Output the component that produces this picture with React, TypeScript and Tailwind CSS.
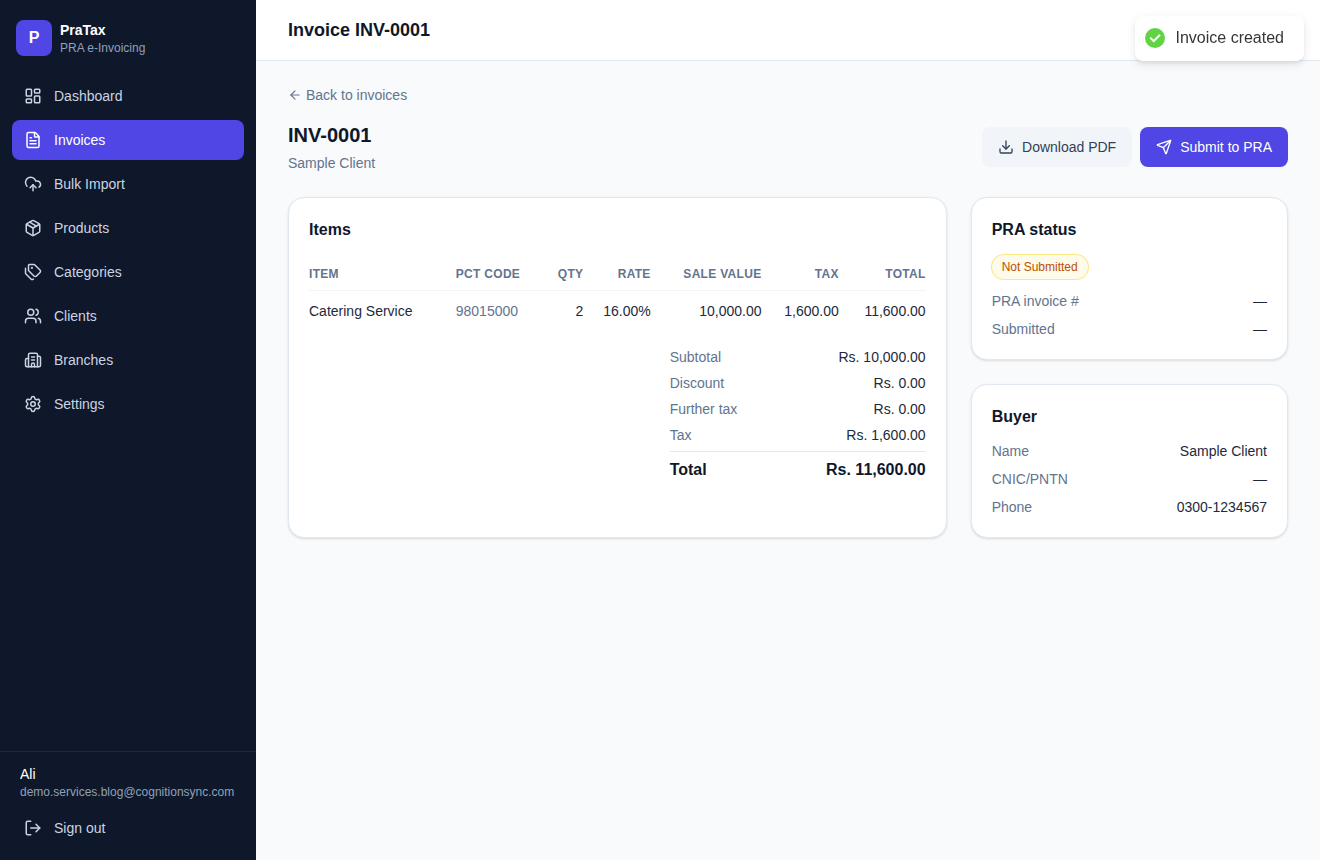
import type { ReactNode } from "react";
import {
  ArrowLeft,
  Building2,
  CloudUpload,
  Download,
  FileText,
  LayoutDashboard,
  LogOut,
  Package,
  Send,
  Settings,
  Tags,
  Users,
  type LucideIcon,
} from "lucide-react";

const navItems: { label: string; icon: LucideIcon; active?: boolean }[] = [
  { label: "Dashboard", icon: LayoutDashboard },
  { label: "Invoices", icon: FileText, active: true },
  { label: "Bulk Import", icon: CloudUpload },
  { label: "Products", icon: Package },
  { label: "Categories", icon: Tags },
  { label: "Clients", icon: Users },
  { label: "Branches", icon: Building2 },
  { label: "Settings", icon: Settings },
];

const lines = [
  {
    item: "Catering Service",
    code: "98015000",
    qty: "2",
    rate: "16.00%",
    value: "10,000.00",
    tax: "1,600.00",
    total: "11,600.00",
  },
];

const totals = [
  ["Subtotal", "Rs. 10,000.00"],
  ["Discount", "Rs. 0.00"],
  ["Further tax", "Rs. 0.00"],
  ["Tax", "Rs. 1,600.00"],
];

function Sidebar() {
  return (
    <aside className="flex w-64 shrink-0 flex-col bg-slate-900">
      <div className="flex items-center gap-2 px-4 py-5">
        <div className="flex size-9 items-center justify-center rounded-lg bg-[#4f46e5] font-bold text-white">
          P
        </div>
        <div>
          <p className="text-sm font-semibold text-white">PraTax</p>
          <p className="text-xs text-slate-400">PRA e-Invoicing</p>
        </div>
      </div>
      <nav className="flex flex-1 flex-col gap-1 px-3">
        {navItems.map(({ label, icon: Icon, active }) => (
          <a
            key={label}
            href="#"
            aria-current={active ? "page" : undefined}
            className={
              active
                ? "flex items-center gap-3 rounded-lg bg-[#4f46e5] px-3 py-2.5 text-sm font-medium text-white"
                : "flex items-center gap-3 rounded-lg px-3 py-2.5 text-sm font-medium text-slate-300"
            }
          >
            <Icon size={18} />
            {label}
          </a>
        ))}
      </nav>
      <div className="border-t border-slate-800 p-3">
        <div className="px-2">
          <p className="truncate text-sm font-medium text-white">Ali</p>
          <p className="truncate text-xs text-slate-400">demo.services.blog@cognitionsync.com</p>
        </div>
        <button
          type="button"
          className="mt-2 flex w-full items-center gap-3 rounded-lg px-3 py-2.5 text-sm font-medium text-slate-300"
        >
          <LogOut size={18} />
          Sign out
        </button>
      </div>
    </aside>
  );
}

function Card({ title, className, children }: { title: string; className?: string; children: ReactNode }) {
  return (
    <section className={`rounded-2xl border border-slate-200 bg-white p-5 shadow-sm ${className ?? ""}`}>
      <h3 className="font-semibold text-slate-900">{title}</h3>
      {children}
    </section>
  );
}

function Row({ label, value }: { label: string; value: string }) {
  return (
    <div className="flex justify-between">
      <dt className="text-slate-500">{label}</dt>
      <dd>{value}</dd>
    </div>
  );
}

function Toast() {
  return (
    <div
      role="status"
      className="fixed top-4 right-4 flex items-center rounded-lg bg-white px-2.5 pt-2 pb-[9px] leading-5 text-[#363636] shadow-[0_3px_10px_rgba(0,0,0,0.1),0_3px_3px_rgba(0,0,0,0.05)]"
    >
      <svg width="20" height="20" viewBox="0 0 20 20" fill="none" aria-hidden="true">
        <circle cx="10" cy="10" r="10" fill="#61d345" />
        <path d="M5.2 9.6 8.7 13.1 15 6.8" stroke="#fff" strokeWidth="2" />
      </svg>
      <p className="mx-2.5 my-1">Invoice created</p>
    </div>
  );
}

export default function App() {
  return (
    <div className="flex min-h-screen bg-slate-50 font-['Liberation_Sans',Arial,sans-serif] text-slate-800">
      <Sidebar />
      <div className="flex min-w-0 flex-1 flex-col">
        <header className="border-b border-slate-200 bg-white px-8 py-4">
          <h1 className="text-lg font-semibold text-slate-900">Invoice INV-0001</h1>
        </header>
        <main className="px-8 py-6">
          <a href="#" className="mb-4 flex w-fit items-center gap-1 text-sm text-slate-500">
            <ArrowLeft size={14} />
            Back to invoices
          </a>
          <div className="mb-6 flex items-center justify-between">
            <div>
              <h2 className="text-xl font-bold text-slate-900">INV-0001</h2>
              <p className="mt-1 text-sm text-slate-500">Sample Client</p>
            </div>
            <div className="flex gap-2">
              <button
                type="button"
                className="flex items-center gap-2 rounded-lg bg-slate-100 px-4 py-2.5 text-sm font-medium text-slate-700"
              >
                <Download size={16} />
                Download PDF
              </button>
              <button
                type="button"
                className="flex items-center gap-2 rounded-lg bg-[#4f46e5] px-4 py-2.5 text-sm font-medium text-white"
              >
                <Send size={16} />
                Submit to PRA
              </button>
            </div>
          </div>

          <div className="grid grid-cols-3 gap-6">
            <Card title="Items" className="col-span-2">
              <table className="mt-4 w-full text-sm">
                <thead>
                  <tr className="border-b border-slate-100 text-right text-xs tracking-wide text-slate-500 uppercase">
                    <th className="py-2 text-left font-semibold">Item</th>
                    <th className="py-2 text-left font-semibold">PCT Code</th>
                    <th className="py-2 font-semibold">Qty</th>
                    <th className="py-2 font-semibold">Rate</th>
                    <th className="py-2 font-semibold">Sale Value</th>
                    <th className="py-2 font-semibold">Tax</th>
                    <th className="py-2 font-semibold">Total</th>
                  </tr>
                </thead>
                <tbody>
                  {lines.map((line) => (
                    <tr key={line.item} className="text-right">
                      <td className="py-2.5 text-left">{line.item}</td>
                      <td className="py-2.5 text-left text-slate-500">{line.code}</td>
                      <td className="py-2.5">{line.qty}</td>
                      <td className="py-2.5">{line.rate}</td>
                      <td className="py-2.5">{line.value}</td>
                      <td className="py-2.5">{line.tax}</td>
                      <td className="py-2.5">{line.total}</td>
                    </tr>
                  ))}
                </tbody>
              </table>
              <dl className="mt-4 ml-auto flex w-64 flex-col gap-1.5 text-sm">
                {totals.map(([label, value]) => (
                  <Row key={label} label={label} value={value} />
                ))}
                <div className="flex justify-between border-t border-slate-200 pt-1.5 text-base font-bold text-slate-900">
                  <dt>Total</dt>
                  <dd>Rs. 11,600.00</dd>
                </div>
              </dl>
            </Card>

            <div className="flex flex-col gap-6">
              <Card title="PRA status">
                <div className="mt-3">
                  <span className="inline-flex items-center rounded-full bg-amber-50 px-2.5 py-1 text-xs font-medium text-amber-700 ring-1 ring-amber-200">
                    Not Submitted
                  </span>
                </div>
                <dl className="mt-3 flex flex-col gap-2 text-sm">
                  <Row label="PRA invoice #" value="—" />
                  <Row label="Submitted" value="—" />
                </dl>
              </Card>
              <Card title="Buyer">
                <dl className="mt-3 flex flex-col gap-2 text-sm">
                  <Row label="Name" value="Sample Client" />
                  <Row label="CNIC/PNTN" value="—" />
                  <Row label="Phone" value="0300-1234567" />
                </dl>
              </Card>
            </div>
          </div>
        </main>
      </div>
      <Toast />
    </div>
  );
}
